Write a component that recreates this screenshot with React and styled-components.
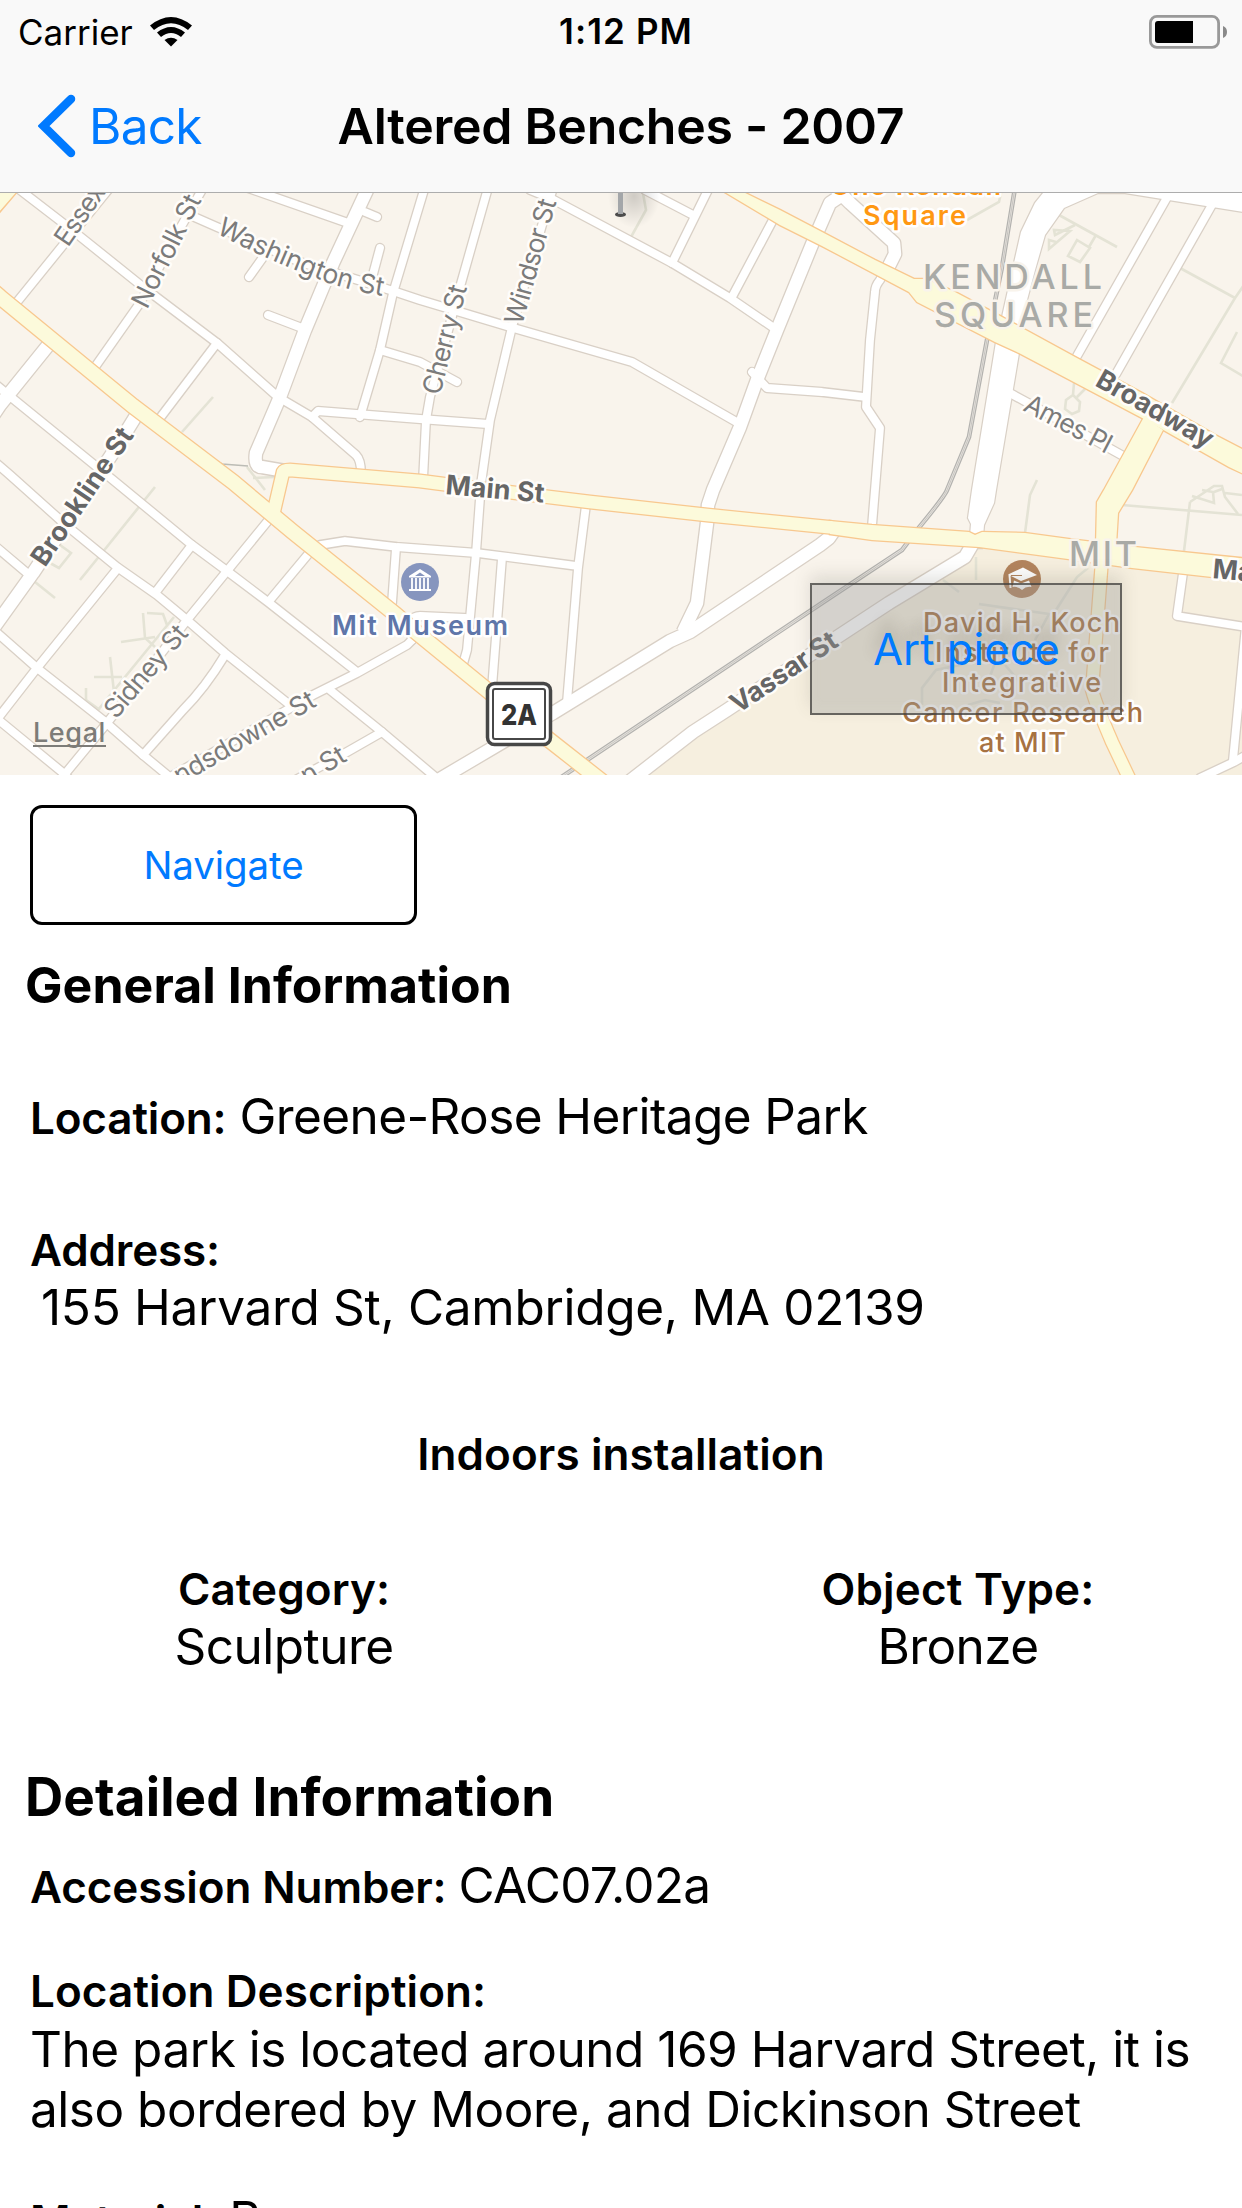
import React from "react";
import styled, { createGlobalStyle } from "styled-components";

const GlobalStyle = createGlobalStyle`
  * { box-sizing: border-box; }
  body { margin: 0; background: #fff; }
`;

const Screen = styled.div`
  width: 1242px;
  height: 2208px;
  overflow: hidden;
  display: flex;
  flex-direction: column;
  background: #fff;
  color: #000;
  font-family: Inter, "Liberation Sans", sans-serif;
`;

const Header = styled.header`
  flex: none;
  height: 193px;
  background: #f9f9f9;
  border-bottom: 1px solid #adadad;
`;

const StatusBar = styled.div`
  display: grid;
  grid-template-columns: 1fr auto 1fr;
  align-items: center;
  height: 60px;
  padding: 0 15px 0 18px;
  font-size: 35px;
  line-height: 62px;
`;

const Carrier = styled.div`
  display: flex;
  align-items: center;
  gap: 17px;
  letter-spacing: 0;
`;

const Clock = styled.div`
  font-weight: 600;
  font-size: 35px;
  line-height: 63px;
  letter-spacing: 1.1px;
  padding-left: 7px;
`;

const BatteryWrap = styled.div`
  display: flex;
  justify-content: flex-end;
`;

const NavBar = styled.div`
  display: grid;
  grid-template-columns: 1fr auto 1fr;
  align-items: center;
  height: 132px;
  padding: 0 38px;
  font-size: 49.5px;
`;

const BackLink = styled.a`
  display: flex;
  align-items: center;
  gap: 13px;
  color: #007aff;
  letter-spacing: -0.7px;
`;

const NavTitle = styled.h1`
  margin: 0;
  font-size: 50px;
  font-weight: 600;
  letter-spacing: -0.25px;
`;

const MapArea = styled.section`
  position: relative;
  flex: none;
  height: 582px;
  overflow: hidden;
  background: #f9f4ec;
`;

const LegalLink = styled.a`
  position: absolute;
  left: 33px;
  top: 523px;
  font-size: 27px;
  line-height: 34px;
  font-weight: 500;
  color: #7d7c78;
  text-decoration: underline;
  text-decoration-thickness: 2px;
  text-underline-offset: 3px;
  text-decoration-skip-ink: none;
  letter-spacing: 0.6px;
`;

const ArtPieceButton = styled.button`
  position: absolute;
  left: 810px;
  top: 390px;
  width: 312px;
  height: 132px;
  padding: 1px 0 0 1px;
  border: 2px solid rgba(60, 58, 56, 0.72);
  background: rgba(150, 150, 150, 0.36);
  box-shadow: 0 -8px 16px rgba(90, 85, 75, 0.16), inset 0 -6px 10px rgba(230, 225, 215, 0.14);
  color: #007aff;
  font: 400 43.5px/1 Inter, "Liberation Sans", sans-serif;
  letter-spacing: 0.1px;
  text-shadow: 0 -12px 14px rgba(80, 70, 60, 0.25);
`;

const Content = styled.main`
  display: flex;
  flex-direction: column;
  padding: 30px 30px 0;
`;

const NavigateButton = styled.button`
  width: 387px;
  height: 120px;
  border: 3px solid #000;
  border-radius: 12px;
  background: #fff;
  color: #007aff;
  font: 400 38.5px/1 Inter, "Liberation Sans", sans-serif;
  letter-spacing: -0.1px;
`;

const Heading = styled.h2`
  margin: ${(p) => p.$top}px 0 0 ${(p) => p.$left}px;
  font-size: ${(p) => p.$size}px;
  line-height: ${(p) => (p.$size > 51 ? 64 : 60)}px;
  font-weight: 700;
  letter-spacing: ${(p) => p.$track}px;
`;

const Field = styled.div`
  display: flex;
  flex-direction: ${(p) => (p.$stacked ? "column" : "row")};
  align-items: ${(p) => (p.$stacked ? "stretch" : "baseline")};
  gap: ${(p) => p.$gap}px;
  margin-top: ${(p) => p.$top}px;
  text-align: ${(p) => (p.$center ? "center" : "left")};
  white-space: nowrap;
`;

const Label = styled.div`
  font-size: 44px;
  line-height: 52px;
  font-weight: 600;
  letter-spacing: ${(p) => p.$track ?? 0.1}px;
`;

const Value = styled.div`
  font-size: 49.5px;
  line-height: 60px;
  letter-spacing: ${(p) => p.$track ?? -0.6}px;
  white-space: pre-line;
  padding-left: ${(p) => p.$indent ?? 0}px;
`;

const Columns = styled.div`
  display: grid;
  grid-template-columns: 508px 508px;
  justify-content: space-between;
  margin-top: 83px;
`;

const MapSvg = styled.svg`
  display: block;
  font-family: Inter, "Liberation Sans", sans-serif;
`;

const minorRoads = [
  "M20 190L72 230L143 287L217 343L278 397L312 417L356 455Q361 460 361 473",
  "M108 190L64 244L17 302",
  "M203 188L178 232L140 303L95 367",
  "M217 343L160 418",
  "M-5 384L17 402L113 480L192 545L227 571L268 602L357 672",
  "M-5 462L10 475L67 526L117 567L157 595L187 620L225 653L290 705",
  "M-5 546L27 573",
  "M-5 631L37 668L103 720L143 755L172 779",
  "M-5 717L62 772L70 780",
  "M118 568L37 668L-5 722",
  "M267 522L227 571L187 620L107 723L60 780",
  "M192 545L155 593",
  "M310 552L270 600",
  "M225 655Q205 688 183 710L143 755",
  "M412 640L407 645L357 673L313 695L165 780",
  "M330 690L382 732L440 781",
  "M382 732L347 752L290 783",
  "M320 545L345 541L397 547L477 553L577 566",
  "M396 548L392 603",
  "M412 640L409 622Q414 616 420 616L465 618",
  "M480 498L476 553L467 650L463 664",
  "M502 558L492 688",
  "M586 505L578 568L567 702",
  "M365 212L377 217",
  "M248 188L348 223",
  "M192 216L217 227L300 262L390 290L420 300L510 327L632 362L740 424",
  "M380 248L372 278",
  "M249 277L264 256",
  "M268 315L302 328",
  "M424 190L393 293L380 350L360 417",
  "M380 350L420 362L457 382",
  "M312 417L318 411L420 419L488 424",
  "M488 188L460 287L430 397L426 420L423 480",
  "M553 188L512 327L490 420L481 484",
  "M530 190L552 199L672 263L730 298L774 328",
  "M645 190L693 215",
  "M709 188L672 263",
  "M774 218L732 297",
  "M895 250L880 280Q875 286 875 292L870 340L866 407L880 428L872 526",
  "M752 372L767 388L822 392L865 397",
  "M1169 194L1077 356",
  "M1213 203L1116 374",
  "M1008 392L1030 404L1125 457",
  "M1183 573L1177 616L1246 627",
  "M1246 625L1233 760",
  "M1250 753L1234 762L1200 778",
];

const majorRoads = [
  "M50 343L0 405L-10 420",
  "M139 411L118 445L33 573L-5 626",
  "M368 188L333 263L305 330L280 397L256 453Q254 467 262 467L285 471",
  "M842 195L830 203L813 242L777 330L757 380L740 427L713 490L708 505L707 523L697 603L683 632",
  "M842 195L850 203L894 243L895 254L886 272",
  "M836 528L829 538L820 545L690 632L670 641L553 713L523 730L440 779",
  "M972 545L965 557L889 603L822 647L727 710L693 732L630 781",
];

const footpaths = [
  "M1059 215L1117 247", "M1077 240L1090 248L1080 262L1068 256ZM1096 235L1089 247",
  "M1075 225L1055 235L1054 230L1070 231L1049 249L1049 240L1056 242",
  "M1180 268L1235 298L1244 285M1235 298L1172 403", "M1237 332L1221 363L1246 378",
  "M1074 383L1073 395L1080 402L1079 411L1072 414L1065 409L1066 400L1073 395M1085 389L1077 397",
  "M1037 480L1030 495L1025 533", "M1122 505L1242 515",
  "M1190 502L1184 551M1190 502L1214 486L1222 486L1225 497L1238 514M1192 496L1214 503L1213 492L1202 490M1214 492L1222 489M1225 493L1242 495",
  "M967 220L999 202L1001 193", "M155 487L110 543L80 580",
  "M147 613L163 614L167 625M143 613L145 638L155 647M121 642L155 637M110 657L114 692M94 677L122 677M86 688L86 700L100 710M174 617L98 710",
  "M35 582L55 598", "M50 563L59 568L71 553L60 545",
  "M213 397L182 432", "M247 467L265 490M253 478L273 477L270 471", "M643 193L646 210L631 237",
  "M976 557L976 580M943 580L959 592M1088 568L1077 577L1056 610M979 604L1049 614L1035 640M922 705L922 688L936 670L960 665L982 655M1005 665L1020 682M996 660L985 690M968 705L985 700L1000 703",
];

const broadway =
  "M718 188L735 188L780 210L822 232L875 260L914 279L926 279L955 292L1002 317L1075 357L1142 393L1215 435L1248 452V476L1229 467L1144 419L1019 353L995 342L917 302L909 292L822 246L780 225Z";
const mainEast =
  "M830 521L872 525L969 532L975 535L982 532L1025 533L1069 539L1135 547L1250 559V580L1212 577L1132 568L1068 559L979 547L872 540L830 534Z";
const amesYellow =
  "M1144 417L1104 490L1097 502L1096 545H1116L1118 513L1132 490L1163 430Z";
const kendallWhite =
  "M1047 188L1035 203L1021 232L1014 263L1002 317L996 342L972 490L968 518L971 524L969 548L982 548L984 525L994 503L996 490L1019 353L1027 300L1035 270L1045 235L1064 208L1098 193L1125 193L1250 213V188Z";

const halo = { paintOrder: "stroke", strokeLinejoin: "round" };

function StreetName({ x, y, angle, length, bold, children }) {
  return (
    <text
      transform={`translate(${x} ${y}) rotate(${angle})`}
      fontSize={bold ? 27 : 26.5}
      fontWeight={bold ? 650 : 400}
      fill={bold ? "#666" : "#7b7b7b"}
      stroke="#fffdfa"
      strokeWidth="5"
      textLength={length}
      {...halo}
    >
      {children}
    </text>
  );
}

function Place({ x, y, length, color, size = 27, weight = 600, stroke = "#fff", children }) {
  return (
    <text x={x} y={y} textLength={length} fontSize={size} fontWeight={weight} fill={color} stroke={stroke} strokeWidth="5" {...halo}>
      {children}
    </text>
  );
}

function Lines({ paths, ...rest }) {
  return (
    <g fill="none" {...rest}>
      {paths.map((d) => (
        <path key={d} d={d} />
      ))}
    </g>
  );
}

function StreetMap() {
  const rail = "M1015 188L1002 267L987 340L969 437L947 490Q945 496 917 530L902 550L822 603L587 760L560 778";
  const massAve = "M-8 290L0 297L133 406L233 482L293 532L395 614L410 627L487 690L548 739L604 783";
  const mainWest = "M273 515L283 472Q284 470 290 470L420 481L443 484L590 502L707 515L832 527.5";
  const amesSouth = "M1102 560L1092 690Q1096 705 1112 742L1130 780";
  return (
    <MapSvg width="1242" height="582" viewBox="0 193 1242 582">
      <defs>
        <radialGradient id="pinShade">
          <stop offset="0" stopColor="#000" stopOpacity=".17" />
          <stop offset="1" stopColor="#000" stopOpacity="0" />
        </radialGradient>
        <path id="washington" d="M216 233Q260 257 318 279Q348 291 390 297" />
      </defs>
      <rect y="193" width="1242" height="582" fill="#f9f4ec" />
      <path d="M978 545L1250 577V780H640L693 738L889 608L968 560Z" fill="#f6efdf" />
      <Lines paths={footpaths} stroke="#e4e3d5" strokeWidth="2.6" />
      <Lines paths={["M212 458L222 464L248 466"]} stroke="#bcbcb5" strokeWidth="1.5" />
      <Lines paths={minorRoads} stroke="#d9d0c6" strokeWidth="10.4" strokeLinecap="round" strokeLinejoin="round" />
      <Lines paths={majorRoads} stroke="#d9d0c6" strokeWidth="15" strokeLinejoin="round" />
      <path d={kendallWhite} fill="#fff" stroke="#d9d0c6" strokeWidth="2.4" />
      <Lines paths={minorRoads} stroke="#fff" strokeWidth="7.8" strokeLinecap="round" strokeLinejoin="round" />
      <Lines paths={majorRoads} stroke="#fff" strokeWidth="12.4" strokeLinejoin="round" />
      <path d={kendallWhite} fill="#fff" />
      <path d={rail} fill="none" stroke="#b3b2af" strokeWidth="4.6" />
      <path d={rail} fill="none" stroke="#e9e5df" strokeWidth="2.2" />
      <path d={rail} fill="none" stroke="#b9b8b5" strokeWidth=".7" />

      <g fill="none" stroke="#f8c88f">
        <path d={massAve} strokeWidth="17" />
        <path d={mainWest} strokeWidth="15" />
        <path d={amesSouth} strokeWidth="14.5" />
        <path d="M-2 180H16V193L-2 214Z" strokeWidth="2" />
        <path d={broadway} strokeWidth="2.6" />
        <path d={amesYellow} strokeWidth="2.6" />
        <path d={mainEast} strokeWidth="2.6" />
      </g>
      <g fill="none" stroke="#fcfadb">
        <path d={massAve} strokeWidth="14.4" />
        <path d={mainWest} strokeWidth="12.4" />
        <path d={amesSouth} strokeWidth="12" />
      </g>
      <g fill="#fcfadb">
        <path d="M-2 180H15.500V193L-2 213Z" />
        <path d={broadway} />
        <path d={amesYellow} />
        <path d={mainEast} />
      </g>

      <ellipse cx="634" cy="196" rx="26" ry="32" fill="url(#pinShade)" />
      <ellipse cx="620.500" cy="214.500" rx="5.500" ry="2.500" fill="#4c4c4c" />
      <rect x="618" y="193" width="5" height="21" fill="#a3a6a9" />

      <StreetName x="68" y="248" angle="-55.500" length="98">Essex St</StreetName>
      <StreetName x="147" y="310" angle="-63.500" length="123">Norfolk St</StreetName>
      <text fontSize="26.500" fill="#7b7b7b" stroke="#fffdfa" strokeWidth="5" {...halo}>
        <textPath href="#washington" textLength="179">Washington St</textPath>
      </text>
      <StreetName x="440" y="396" angle="-76" length="112">Cherry St</StreetName>
      <StreetName x="522" y="326" angle="-74.500" length="129">Windsor St</StreetName>
      <StreetName x="45" y="568" angle="-56" length="160" bold>Brookline St</StreetName>
      <StreetName x="445" y="494" angle="5" length="99" bold>Main St</StreetName>
      <StreetName x="1094" y="385" angle="29.500" length="130" bold>Broadway</StreetName>
      <StreetName x="1022" y="410" angle="27.500" length="95">Ames Pl</StreetName>
      <StreetName x="116" y="720" angle="-49.500" length="113">Sidney St</StreetName>
      <StreetName x="180" y="785" angle="-30" length="159">ndsdowne St</StreetName>
      <StreetName x="307" y="785" angle="-31" length="48">n St</StreetName>
      <StreetName x="738" y="714" angle="-34" length="123" bold>Vassar St</StreetName>
      <StreetName x="1212" y="578" angle="5" length="99" bold>Main St</StreetName>

      <Place x="863" y="225" length="103" color="#ff9812">Square</Place>
      <Place x="830" y="195" length="171" color="#ff9812">One Kendall</Place>
      <Place x="923" y="289" length="179" color="#a9aaa6" size="34" weight="550" stroke="#f9f4ec">KENDALL</Place>
      <Place x="934" y="327" length="159" color="#a9aaa6" size="34" weight="550" stroke="#f9f4ec">SQUARE</Place>
      <Place x="1069" y="566" length="68" color="#a9aaa6" size="34" weight="550" stroke="#f9f4ec">MIT</Place>
      <Place x="332" y="634.500" length="176" color="#5f76a9">Mit Museum</Place>
      <Place x="923" y="631.500" length="197" color="#a77242" weight="550">David H. Koch</Place>
      <Place x="935" y="661.500" length="174" color="#a77242" weight="550">Institute for</Place>
      <Place x="942" y="691.500" length="159" color="#a77242" weight="550">Integrative</Place>
      <Place x="902" y="721.500" length="241" color="#a77242" weight="550">Cancer Research</Place>
      <Place x="979" y="751.500" length="87" color="#a77242" weight="550">at MIT</Place>

      <circle cx="420" cy="582" r="19" fill="#8695be" />
      <path d="M409 576L420 569L431 576V577.500H409ZM409 589H431V591H409Z" fill="#fff" />
      <path d="M415 576L420 572.500L425 576Z" fill="#8695be" />
      <path d="M412 578V589M416 578V589M420 578V589M424 578V589M428 578V589" stroke="#fff" strokeWidth="1.800" />

      <circle cx="1022" cy="579" r="19" fill="#b3845d" />
      <path d="M1008 574.500L1023 567.500L1037 575L1021 581Z" fill="#fff" />
      <path d="M1014 580.500L1021 583.500L1029 580.500L1031.500 587Q1026 586 1022 590Q1018 586 1012.500 587Z" fill="#fff" />
      <path d="M1009.500 575L1010.500 588" stroke="#fff" strokeWidth="2" />
      <path d="M1011 575.500H1022" stroke="#b3845d" strokeWidth="1" />

      <rect x="487.500" y="683.500" width="63" height="61" rx="7" fill="#fff" stroke="#474747" strokeWidth="3.500" />
      <rect x="493" y="689" width="52" height="50" rx="2" fill="#fff" stroke="#474747" strokeWidth="2" />
      <text x="501" y="725" textLength="36" lengthAdjust="spacingAndGlyphs" fontSize="29" fontWeight="800" fill="#333">2A</text>
    </MapSvg>
  );
}

function Wifi() {
  return (
    <svg width="42" height="30" viewBox="0 0 42 30">
      <path d="M0 8.500Q21-8.500 42 8.500L38 13Q21-.5 4 13Z" />
      <path d="M7 15.500Q21 4.500 35 15.500L31 20Q21 12 11 20Z" />
      <path d="M14.500 23Q21 18.500 27.500 23L21 29.500Z" />
    </svg>
  );
}

function Battery() {
  return (
    <svg width="78" height="34" viewBox="0 0 78 34">
      <rect x="1.400" y="1.400" width="68.200" height="31" rx="6.500" fill="none" stroke="#999" strokeWidth="2.800" />
      <rect x="6" y="6" width="38" height="22" rx="3" />
      <path d="M38 6H44V28H38Z" />
      <path d="M74 11Q78 12.500 78 17T74 23Z" fill="#8a8a8a" />
    </svg>
  );
}

export default function App() {
  return (
    <Screen>
      <GlobalStyle />
      <Header>
        <StatusBar>
          <Carrier>
            Carrier
            <Wifi />
          </Carrier>
          <Clock>1:12 PM</Clock>
          <BatteryWrap>
            <Battery />
          </BatteryWrap>
        </StatusBar>
        <NavBar>
          <BackLink>
            <svg width="38" height="64" viewBox="0 0 38 64">
              <path d="M33 5L5.500 32L33 59" fill="none" stroke="#007aff" strokeWidth="8.500" strokeLinecap="round" strokeLinejoin="miter" />
            </svg>
            Back
          </BackLink>
          <NavTitle>Altered Benches - 2007</NavTitle>
        </NavBar>
      </Header>

      <MapArea>
        <StreetMap />
        <LegalLink>Legal</LegalLink>
        <ArtPieceButton>Art piece</ArtPieceButton>
      </MapArea>

      <Content>
        <NavigateButton>Navigate</NavigateButton>

        <Heading $top={30} $left={-5} $size={50} $track={0.05}>General Information</Heading>
        <Field $top={71} $gap={13}>
          <Label $track={-0.15}>Location:</Label>
          <Value>Greene-Rose Heritage Park</Value>
        </Field>
        <Field $stacked $top={78} $gap={1}>
          <Label $track={-0.15}>Address:</Label>
          <Value $indent={11} $track={-0.3}>155 Harvard St, Cambridge, MA 02139</Value>
        </Field>
        <Field $stacked $center $top={91}>
          <Label>Indoors installation</Label>
        </Field>
        <Columns>
          <Field $stacked $center $gap={1}>
            <Label>Category:</Label>
            <Value $track={-0.5}>Sculpture</Value>
          </Field>
          <Field $stacked $center $gap={1}>
            <Label $track={0.2}>Object Type:</Label>
            <Value>Bronze</Value>
          </Field>
        </Columns>

        <Heading $top={89} $left={-5} $size={53} $track={0.1}>Detailed Information</Heading>
        <Field $top={26} $gap={12}>
          <Label $track={-0.1}>Accession Number:</Label>
          <Value $track={-0.7}>CAC07.02a</Value>
        </Field>
        <Field $stacked $top={50} $gap={2}>
          <Label>Location Description:</Label>
          <Value $track={-0.48}>{"The park is located around 169 Harvard Street, it is\nalso bordered by Moore, and Dickinson Street"}</Value>
        </Field>
        <Field $top={50} $gap={12}>
          <Label $track={0}>Material:</Label>
          <Value>Bronze</Value>
        </Field>
      </Content>
    </Screen>
  );
}
